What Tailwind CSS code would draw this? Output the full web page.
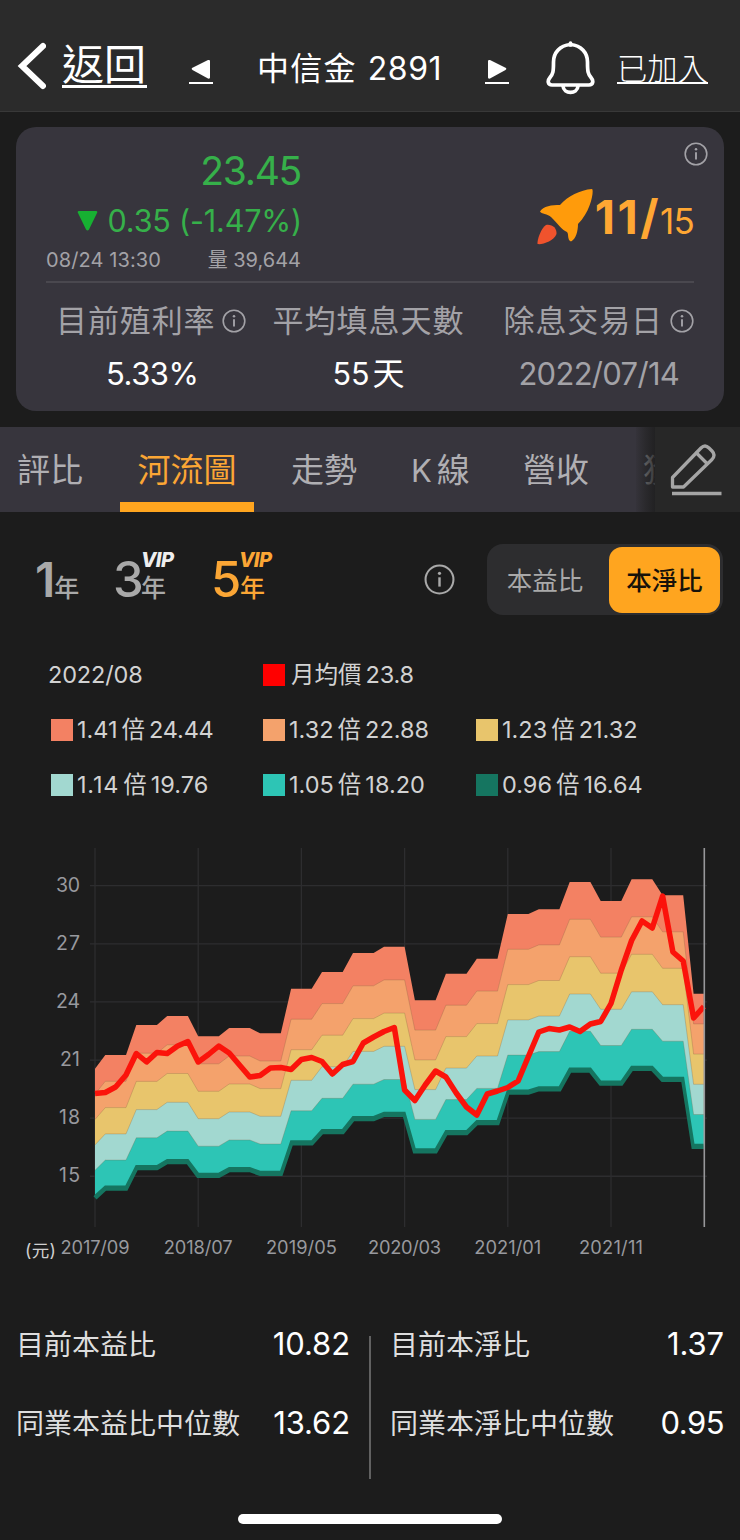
<!DOCTYPE html>
<html lang="zh-Hant">
<head>
<meta charset="utf-8">
<title>中信金 2891</title>
<script src="https://cdn.jsdelivr.net/npm/@tailwindcss/browser@4"></script>
</head>
<body class="w-[740px] h-[1540px] overflow-hidden bg-[#1c1c1c] text-white font-['Inter','Noto_Sans_CJK_TC',sans-serif]">
<svg class="hidden">
  <symbol id="info" viewBox="0 0 24 24">
    <circle cx="12" cy="12" r="10.8" fill="none" stroke="currentColor" stroke-width="1.6"/>
    <path d="M12 10.3v7.2" stroke="currentColor" stroke-width="1.9" fill="none"/>
    <circle cx="12" cy="7.2" r="1.25" fill="currentColor"/>
  </symbol>
</svg>
<div class="flex flex-col h-full">
  <header class="flex items-center h-[112px] pt-[24px] shrink-0 bg-[#2b2b2b] border-b border-[#383838] whitespace-nowrap">
    <svg class="w-[30px] h-[50px] ml-[16px] mr-px shrink-0 -mt-[6px]" viewBox="0 0 30 50" fill="none" stroke="#fff" stroke-width="6" stroke-linecap="round" stroke-linejoin="miter"><path d="M27 6L6 26L27 46"/></svg>
    <div class="ml-[15px] w-[85px] h-[46px] -mt-[6px] border-b-[3px] border-white text-[42px] leading-[46px]">返回</div>
    <div class="ml-[42px] mt-[5px] w-[24px] h-[28px] border-b-2 border-white flex justify-center items-center"><svg class="w-[20px] h-[20px]" viewBox="0 0 20 20"><path d="M1 9Q0 10 1.500 11L17 19.500Q19 20 19 18.500V2Q19 .5 17 1Z" fill="#fff"/></svg></div>
    <div class="ml-[44px] mt-[2px] w-[185px] flex justify-between items-center text-[32px] leading-[40px]"><span class="tracking-[1.3px]">中信金</span><span class="tracking-[.5px]">2891</span></div>
    <div class="ml-[43px] mt-[5px] w-[24px] h-[28px] border-b-2 border-white flex justify-center items-center"><svg class="w-[20px] h-[20px]" viewBox="0 0 20 20"><path d="M19 9Q20 10 18.500 11L3 19.500Q1 20 1 18.500V2Q1 .5 3 1Z" fill="#fff"/></svg></div>
    <svg class="w-[50px] h-[54px] ml-[36px]" viewBox="0 0 50 54" fill="none" stroke="#fff" stroke-width="3.700" stroke-linecap="round" stroke-linejoin="round"><path d="M25.500 3.500C14.500 4.500 8.500 12 8.500 21C8.500 31 8 33 5 36.500C2 40 3 44 7 44H44C48 44 49 40 46 36.500C43 33 42.500 31 42.500 21C42.500 12 36.500 4.500 25.500 3.500Z"/><path d="M18 45C18.500 53.500 32.500 53.500 33 45"/><path d="M25.500 2V4"/></svg>
    <div class="ml-[22px] mt-[1px] w-[91px] h-[32px] border-b-2 border-white text-[30.300px] font-light leading-[34px]">已加入</div>
  </header>

  <section class="mx-[16px] mt-[15px] h-[284px] shrink-0 rounded-[20px] bg-[#37353d] pt-[18px] px-[30px] whitespace-nowrap">
    <div class="flex justify-between h-[138px] border-b-2 border-[#4a484f]">
      <div class="w-[255px] flex flex-col items-end text-[#36b04a]">
        <div class="text-[39px] leading-[52px] tracking-[-1.3px]">23.45</div>
        <div class="flex items-center h-[48px] gap-[10px] -mr-[1px]">
          <svg class="w-[21px] h-[20px]" viewBox="0 0 21 20"><path d="M2 0H19Q21 0 20 2L12 18.500Q10.500 20.500 9 18.500L1 2Q0 0 2 0Z" fill="#17b032"/></svg>
          <span class="text-[30.500px] tracking-[-.18px]">0.35 (-1.47%)</span>
        </div>
        <div class="w-full flex justify-between text-[20px] leading-[31px] text-[#a3a2a7]"><span class="tracking-[.1px]">08/24 13:30</span><span>量 39,644</span></div>
      </div>
      <div class="flex flex-col items-end">
        <svg class="w-[24px] h-[24px] text-[#a3a2a7] -mr-[14px] -mt-[3px]"><use href="#info"/></svg>
        <div class="flex items-center mt-[21px] h-[60px]">
          <svg class="w-[56px] h-[56px]" viewBox="0 0 56 56"><path d="M55 0C57 0 55 21 41 35C41 42 39 50 34 52.500C30 51 32 45 30 43C25 41 20 34 14 28C11 25 4 25 3 22.500C6 17 15 16 23 16C31 7 43 1 55 0Z" fill="#ff9b0b"/><path d="M9 36C15 35 20 39 19.500 45C17 52 5 56 .5 55C0 51 4 39 9 36Z" fill="#f0532d"/></svg>
          <div class="flex items-baseline text-[#ffa733] ml-[2px] mt-[4px]"><span class="text-[47px] font-bold leading-[50px] tracking-[2.500px]">11/</span><span class="text-[35px] leading-[50px] tracking-[-.8px] -ml-[1px]">15</span></div>
        </div>
      </div>
    </div>
    <div class="flex mt-[13px] ml-[10px] text-[#a3a2a7] text-[31px] leading-[50px]">
      <div class="w-[190px]">
        <div class="flex items-center gap-[6px] tracking-[.9px]">目前殖利率<svg class="w-[24px] h-[24px] shrink-0"><use href="#info"/></svg></div>
        <div class="text-center text-[31px] leading-[56px] text-white tracking-[-.5px] pl-[3px]">5.33%</div>
      </div>
      <div class="w-[192px] ml-[27px]">
        <div class="tracking-[1px]">平均填息天數</div>
        <div class="flex justify-center gap-[3px] text-[30.500px] leading-[56px] text-white"><span>55</span><span class="text-[32px]">天</span></div>
      </div>
      <div class="w-[194px] ml-[39px]">
        <div class="flex items-center gap-[7px] tracking-[.9px]">除息交易日<svg class="w-[24px] h-[24px] shrink-0"><use href="#info"/></svg></div>
        <div class="text-center text-[31px] leading-[56px] tracking-[-.7px]">2022/07/14</div>
      </div>
    </div>
  </section>

  <nav class="mt-[16px] h-[85px] shrink-0 flex bg-[#37353d] text-[#b0afb3] text-[33px] leading-[87px] whitespace-nowrap">
    <div class="w-[655px] shrink-0 relative overflow-hidden flex">
      <span class="ml-[17px] w-[103px] shrink-0">評比</span>
      <span class="w-[134px] shrink-0 text-center text-[#fba635] border-b-[10px] border-[#ffa51f]">河流圖</span>
      <span class="ml-[37px] w-[120px] shrink-0">走勢</span>
      <span class="w-[112px] shrink-0 flex gap-[5px]"><span class="text-[31px]">K</span>線</span>
      <span class="w-[120px] shrink-0">營收</span>
      <span class="shrink-0">獲利</span>
      <div class="absolute right-0 top-0 w-[19px] h-[85px] bg-linear-to-r from-[#222]/10 via-[#222]/60 to-[#1c1c1c]/80"></div>
    </div>
    <div class="flex-1 bg-[#272727] flex items-center">
      <svg class="w-[54px] h-[54px] ml-[15px]" viewBox="0 0 54 54" fill="none" stroke="#a5a5a5" stroke-width="3.300" stroke-linejoin="round" stroke-linecap="round"><path d="M2.500 43.500V34.500L31 5Q35 1 39 5L42 8Q46 12 42 16.500L13.500 44H2.500Z"/><path d="M26.500 10L37 20.500"/><path stroke-linecap="butt" d="M2 50.500H51.500"/></svg>
    </div>
  </nav>

  <section class="h-[131px] shrink-0 flex whitespace-nowrap text-[#a9a9a9]">
    <div class="flex ml-[35px] pt-[43px] h-[100px] items-baseline font-semibold leading-[50px]">
      <div class="w-[78px] flex items-baseline"><span class="text-[48px] tracking-[-1px]">1</span><span class="text-[25px] font-medium">年</span></div>
      <div class="w-[98px] flex items-baseline relative"><span class="text-[49px] font-medium w-[28px] tracking-[-2px]">3</span><span class="text-[25px] font-medium">年</span><b class="absolute left-[28px] -top-[5px] text-[20px] leading-[20px] italic font-extrabold tracking-[-.6px] text-[#eee]">VIP</b></div>
      <div class="flex items-baseline relative text-[#fba635]"><span class="text-[49px] font-medium w-[29px] tracking-[-2px]">5</span><span class="text-[25px] font-medium">年</span><b class="absolute left-[28px] -top-[5px] text-[20px] leading-[20px] italic font-extrabold tracking-[-.6px]">VIP</b></div>
    </div>
    <svg class="w-[31px] h-[31px] ml-auto mt-[52px]"><use href="#info"/></svg>
    <div class="ml-[32px] mr-[17px] mt-[32px] w-[236px] h-[71px] rounded-[16px] bg-[#2d2d2f] flex items-center text-[25.500px]">
      <span class="w-[122px] text-center pr-[6px] leading-[66px] pt-[2px]">本益比</span>
      <span class="w-[111px] h-[66px] leading-[67px] rounded-[13px] bg-[#ffa51f] text-center text-[#17120a] font-medium">本淨比</span>
    </div>
  </section>

  <section class="shrink-0 grid grid-cols-[212px_213px_1fr] auto-rows-[55px] pl-[51px] pt-[4px] h-[192px] text-[23.500px] leading-[55px] text-[#d2d2d2] whitespace-nowrap">
    <span class="-ml-[3px] tracking-[-.15px]">2022/08</span>
    <span class="flex items-center col-span-2"><i class="size-[22px] bg-[#ff0000] mr-[6px]"></i>月均價<span class="ml-[4px] tracking-[-.2px]">23.8</span></span>
    <span class="flex items-center"><i class="size-[22px] bg-[#f38163] mr-[4px]"></i>1.41<span class="mx-[4px]">倍</span><span class="tracking-[-.2px]">24.44</span></span>
    <span class="flex items-center"><i class="size-[22px] bg-[#f4a26c] mr-[4px]"></i>1.32<span class="mx-[4px]">倍</span>22.88</span>
    <span class="flex items-center"><i class="size-[22px] bg-[#e8c56c] mr-[4px]"></i>1.23<span class="mx-[4px]">倍</span>21.32</span>
    <span class="flex items-center"><i class="size-[22px] bg-[#a2d8d0] mr-[4px]"></i><span class="tracking-[.8px]">1.14</span><span class="mx-[4px]">倍</span>19.76</span>
    <span class="flex items-center"><i class="size-[22px] bg-[#2dc5b5] mr-[4px]"></i>1.05<span class="mx-[4px]">倍</span>18.20</span>
    <span class="flex items-center"><i class="size-[22px] bg-[#157560] mr-[4px]"></i>0.96<span class="mx-[4px]">倍</span>16.64</span>
  </section>

  <svg id="chart" class="shrink-0 w-[740px] h-[435px]" viewBox="0 835 740 435"></svg>

  <section class="shrink-0 mt-[34px] h-[175px] flex text-[28px] leading-[79px] text-[#dedede] whitespace-nowrap">
    <div class="w-[350px] pl-[16px]">
      <div class="flex justify-between"><span class="mt-[2px] -mb-[2px]">目前本益比</span><span class="text-[31px] tracking-[-.1px] text-white">10.82</span></div>
      <div class="flex justify-between"><span class="mt-[2px] -mb-[2px]">同業本益比中位數</span><span class="text-[31px] tracking-[-.1px] text-white">13.62</span></div>
    </div>
    <div class="w-[2px] h-[143px] bg-[#616161] ml-[19px] mt-[32px]"></div>
    <div class="w-[353px] pl-[19px]">
      <div class="flex justify-between"><span class="mt-[2px] -mb-[2px]">目前本淨比</span><span class="text-[31px] tracking-[-.1px] text-white">1.37</span></div>
      <div class="flex justify-between"><span class="mt-[2px] -mb-[2px]">同業本淨比中位數</span><span class="text-[31px] tracking-[-.5px] text-white">0.95</span></div>
    </div>
  </section>
  <div class="shrink-0 mt-[35px] mx-auto w-[264px] h-[10px] rounded-full bg-white"></div>
</div>
<script>
const X = i => 95 + i * 10.32;
const Y = v => 885.7 + (30 - v) * 19.37;
// Top band in pixels: [first month, last month, y]
const steps = [[0,0,1068.7],[1,3,1055],[4,6,1025],[7,9,1016],[10,12,1036.3],[13,15,1028],[16,18,1033.3],[19,21,988.7],[22,24,972],[25,27,953],[28,30,946.7],[31,33,1000.3],[34,36,973.7],[37,39,958.7],[40,42,914],[43,45,909.3],[46,48,882],[49,51,901],[52,54,879.3],[55,57,895.3],[58,59,993.7]];
const ratios = [1.41,1.32,1.23,1.14,1.05,0.96];
const fills = ['#f38163','#f4a26c','#e8c56c','#a2d8d0','#2dc5b5'];
const level = r => steps.flatMap(([a,b,y]) => {
  const v = 30 - (y - 885.7) / 19.37, yy = Y(v * r / 1.41);
  return a === b ? [[X(a),yy]] : [[X(a),yy],[X(b),yy]];
});
const pts = p => p.map(q => q[0].toFixed(1) + ',' + q[1].toFixed(1)).join(' ');
const price = [1093.5,1092.5,1087,1075,1053.5,1062,1052.5,1053.5,1046,1041.5,1062,1054.5,1046,1053,1065,1077,1075.5,1068,1067.5,1069.5,1059.5,1057.5,1061.5,1074,1064.5,1061.5,1043,1037,1031.5,1027.5,1090,1100.5,1085,1071,1077,1093,1107,1115,1094,1091,1087.5,1081,1056.5,1032,1028.5,1030,1027,1031.5,1024,1021.5,1003.5,970,940.5,921,928,896,952,961,1018,1006.5];
let s = '';
for (let v = 15; v <= 30; v += 3) {
  s += `<path d="M90 ${Y(v)}H707" stroke="#2d2d2f" stroke-width="1.3"/>`;
  s += `<text x="80" y="${Y(v) + 6}" text-anchor="end" font-size="19.500" fill="#98999e" textLength="${v === 21 ? 20 : v === 15 || v === 18 ? 21 : 24}">${v}</text>`;
}
for (let i = 0; i <= 50; i += 10) s += `<path d="M${X(i)} 848V1227" stroke="#2d2d2f" stroke-width="1.3"/>`;
const levels = ratios.map(level);
const bottom = levels[5].map(([x,y]) => [x, y + 2]);
s += `<polyline points="${pts(bottom)}" fill="none" stroke="#157560" stroke-width="4.500"/>`;
fills.forEach((f, k) => {
  s += `<polygon points="${pts(levels[k])} ${pts([...levels[5]].reverse())}" fill="${f}"/>`;
  if (k) s += `<polyline points="${pts(levels[k])}" fill="none" stroke="#806040" stroke-opacity=".4" stroke-width=".7"/>`;
});
s += `<polyline points="${pts(levels[5])}" fill="none" stroke="#157560" stroke-width="2"/>`;
s += `<polyline points="${pts(price.map((y, i) => [X(i), y]))}" fill="none" stroke="#fb130b" stroke-width="5.500" stroke-linejoin="round"/>`;
s += '<path d="M704.300 848V1227" stroke="#97979a" stroke-width="1.600"/>';
['2017/09','2018/07','2019/05','2020/03','2021/01','2021/11'].forEach((t, k) => {
  const w = [69,69,71,73,67,64][k];
  s += `<text x="${X(k * 10) - w / 2}" y="1253.500" font-size="18.300" fill="#98999e" textLength="${w}">${t}</text>`;
});
s += '<text x="25" y="1257" font-size="17.500" fill="#d0d0d0" textLength="31">(元)</text>';
document.getElementById('chart').innerHTML = s;
</script>
</body>
</html>
